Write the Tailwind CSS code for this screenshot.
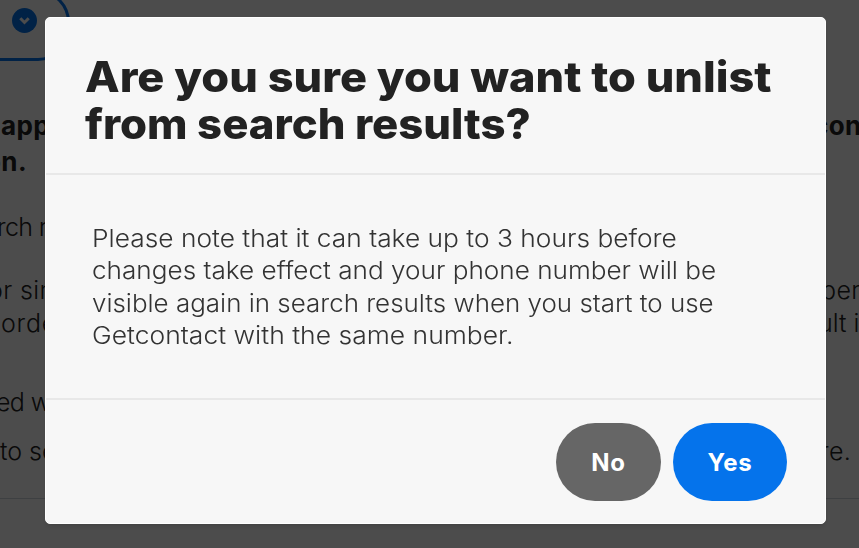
<!DOCTYPE html>
<html lang="en">
<head>
    <meta charset="UTF-8">
    <meta name="viewport" content="width=device-width, initial-scale=1.0">
    <script src="https://cdn.jsdelivr.net/npm/@tailwindcss/browser@4"></script>
    <title>Unlist from search results</title>
</head>
<body class="h-[548px] overflow-hidden bg-white font-['Inter',sans-serif] text-[#222222]">
    <!-- Page content -->
    <main class="h-[548px] overflow-hidden text-[25px] leading-[33px] tracking-[0.4px] whitespace-nowrap">
        <div class="-mt-[10px] w-[70px] h-[71px] rounded-r-[32px] border-y-3 border-r-3 border-[#0573eb] flex items-end pl-3 pb-[25px]">
            <svg class="size-[25px]" viewBox="0 0 25 25" fill="none">
                <circle cx="12.5" cy="12.5" r="12.5" fill="#0573eb" />
                <path d="M8.3 10.3l4.2 4.2 4.2-4.2" stroke="#ffffff" stroke-width="3" />
            </svg>
        </div>
        <div class="mt-[47px] flex justify-between text-[26px] leading-[36px] font-bold">
            <p><span class="ml-px">app</span><br><span class="-ml-[15px]">on.</span></p>
            <p class="w-[46px]">con</p>
        </div>
        <p class="mt-[31px] font-light"><span class="-ml-[3px] tracking-tight">rch r</span></p>
        <div class="mt-[30px] flex justify-between font-light">
            <p><span class="-ml-3">or sim</span><br><span class="ml-px tracking-[0.8px]">order</span></p>
            <p class="w-[38px]">ber<br><span class="-ml-[3px] tracking-normal">ult in</span></p>
        </div>
        <p class="mt-[46px] font-light"><span class="-ml-1 tracking-tight">ed wi</span></p>
        <div class="mt-4 flex justify-between font-light">
            <p class="tracking-normal">to se</p>
            <p class="w-[39px] tracking-[0.4px]">re.</p>
        </div>
        <hr class="mt-[30px] border-gray-300">
    </main>

    <!-- Modal -->
    <div class="fixed inset-0 bg-black/70 pt-[17px] pl-[45px]">
        <div class="w-[781px] h-[507px] rounded-[5px] bg-[#f7f7f7] border border-white shadow-md whitespace-nowrap flex flex-col">
            <div class="h-[157px] pl-[39px] pt-[35px] border-b-2 border-[#e8e8e8]">
                <h2 class="flex flex-col items-start text-[42px] leading-[47px] font-extrabold">
                    <span class="origin-left scale-x-[1.073]">Are you sure you want to unlist</span>
                    <span class="origin-left scale-x-[1.04]">from search results?</span>
                </h2>
            </div>
            <div class="h-[225px] pl-[46px] pt-12 border-b-2 border-[#e8e8e8]">
                <p class="flex flex-col items-start text-[24px] leading-[32.3px] font-light text-[#333333]">
                    <span class="origin-left scale-x-[1.097]">Please note that it can take up to 3 hours before</span>
                    <span class="origin-left scale-x-[1.089]">changes take effect and your phone number will be</span>
                    <span class="origin-left scale-x-[1.081]">visible again in search results when you start to use</span>
                    <span class="origin-left scale-x-[1.103]">Getcontact with the same number.</span>
                </p>
            </div>
            <div class="pt-[23px] pr-[38px] flex justify-end gap-3 text-[24px] font-bold text-white">
                <button class="w-[105px] h-[78px] pt-0.5 rounded-full bg-[#666666] tracking-[0.8px]">No</button>
                <button class="w-[114px] h-[78px] pt-0.5 rounded-full bg-[#0573eb] tracking-[0.8px]">Yes</button>
            </div>
        </div>
    </div>
</body>
</html>
